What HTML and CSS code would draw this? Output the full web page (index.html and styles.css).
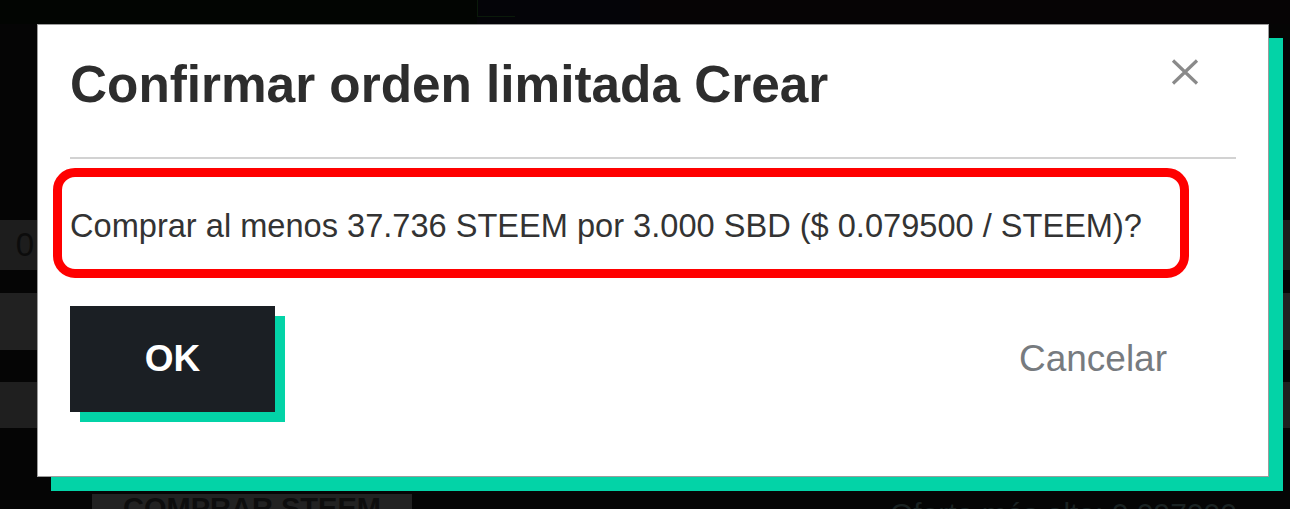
FILE: index.html
```html
<!DOCTYPE html>
<html lang="es">
<head>
<meta charset="utf-8">
<title>Confirmar orden limitada</title>
<link rel="stylesheet" href="styles.css">
</head>
<body>
<div class="page">
  <div class="top">
    <div class="seg seg-green"><span class="trace"></span></div>
    <div class="seg seg-blue"></div>
    <div class="seg seg-red"></div>
  </div>
  <div class="rows">
    <div class="row row-1"><div class="cell cell-left">0</div><div class="cell cell-right"></div></div>
    <div class="row row-2"><div class="cell cell-left"></div><div class="cell cell-right"></div></div>
    <div class="row row-3"><div class="cell cell-left"></div><div class="cell cell-right"></div></div>
  </div>
  <div class="bottom">
    <div class="buy">COMPRAR STEEM</div>
    <div class="bid">Oferta más alta: 0.097000</div>
  </div>

  <div class="overlay">
    <div class="dialog">
      <div class="header">
        <h2 class="title">Confirmar orden limitada Crear</h2>
        <button class="close" aria-label="Cerrar">
          <svg width="28" height="26" viewBox="0 0 28 26">
            <path d="M2 1.5 L26 24.5 M26 1.5 L2 24.5" stroke="#8a8a8a" stroke-width="3.2" stroke-linecap="butt" fill="none"/>
          </svg>
        </button>
      </div>
      <div class="divider"></div>
      <div class="message">Comprar al menos 37.736 STEEM por 3.000 SBD ($ 0.079500 / STEEM)?</div>
      <div class="footer">
        <button class="ok">OK</button>
        <button class="cancel">Cancelar</button>
      </div>
    </div>
  </div>
</div>
</body>
</html>
```
FILE: styles.css
```css
* { box-sizing: border-box; }

html, body {
  margin: 0;
  padding: 0;
  background: #050505;
  font-family: "Liberation Sans", Arial, sans-serif;
}

.page {
  position: relative;
  width: 1290px;
  height: 509px;
  overflow: hidden;
  background: #050505;
}

/* background page */
.top {
  display: flex;
  height: 24px;
}
.seg { height: 24px; }
.seg-green { width: 477px; background: #020502; position: relative; }
.seg-blue { width: 163px; background: #040408; }
.seg-red { flex: 1; background: #060405; }
.trace {
  position: absolute;
  left: 477px;
  top: 0;
  width: 38px;
  height: 17px;
  border-left: 1px solid #0a1a0a;
  border-bottom: 1px solid #0a1a0a;
}

.rows {
  margin-top: 196px;
}
.row {
  display: flex;
  justify-content: space-between;
}
.row-1 { height: 50px; }
.row-2 { height: 57px; margin-top: 23px; }
.row-3 { height: 46px; margin-top: 32px; }
.cell { height: 100%; }
.cell-left {
  width: 37px;
  background: #1d1d1d;
  color: #0c0c0c;
  font-size: 33px;
  line-height: 50px;
  text-align: right;
  padding-right: 3px;
}
.row-2 .cell-left, .row-2 .cell-right { background: #212121; }
.row-3 .cell-left, .row-3 .cell-right { background: #1f1f1f; }
.cell-right {
  width: 7px;
  background: #1d1d1d;
}

.bottom {
  display: flex;
  margin-top: 66px;
}
.buy {
  margin-left: 92px;
  width: 320px;
  height: 30px;
  background: #222;
  color: #0d0d0d;
  font-weight: bold;
  font-size: 29px;
  line-height: 29px;
  text-align: center;
}
.bid {
  margin-left: 478px;
  padding-top: 5px;
  color: #1a2222;
  font-size: 30px;
  line-height: 30px;
  white-space: nowrap;
}

/* modal */
.overlay {
  position: absolute;
  inset: 0;
  padding: 24px 0 0 37px;
}
.dialog {
  width: 1232px;
  height: 453px;
  background: #fff;
  border: 1px solid #9c9c9c;
  box-shadow: 14px 14px 0 #03d3a7;
  padding: 31px 32px 0 32px;
}

.header {
  display: flex;
  justify-content: space-between;
  align-items: flex-start;
}
.title {
  margin: 0;
  font-size: 51.3px;
  line-height: 58px;
  font-weight: bold;
  color: #2d2d2d;
  white-space: nowrap;
}
.close {
  margin: 3px 37px 0 0;
  padding: 0;
  border: 0;
  background: none;
  width: 28px;
  height: 26px;
  display: flex;
}

.divider {
  margin-top: 43px;
  height: 2px;
  background: #d2d2d2;
}

.message {
  margin: 9px 47px 0 -17px;
  border: 9px solid #ff0000;
  border-radius: 22px;
  padding: 30px 0 24px 8px;
  font-size: 32.6px;
  line-height: 38px;
  color: #333;
  white-space: nowrap;
}

.footer {
  margin-top: 28px;
  display: flex;
  justify-content: space-between;
  align-items: center;
}
.ok {
  width: 205px;
  height: 106px;
  border: 0;
  background: #1b1f24;
  color: #fff;
  font-family: "Liberation Sans", Arial, sans-serif;
  font-weight: bold;
  font-size: 37px;
  box-shadow: 10px 10px 0 #03d3a7;
  padding: 0;
}
.cancel {
  margin-right: 69px;
  border: 0;
  background: none;
  padding: 0;
  color: #777b7f;
  font-family: "Liberation Sans", Arial, sans-serif;
  font-size: 37px;
  line-height: 42px;
}
```
